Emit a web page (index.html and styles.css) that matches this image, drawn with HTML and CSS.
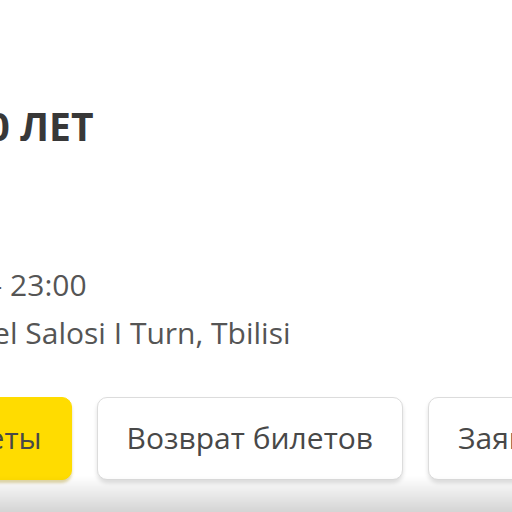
FILE: index.html
```html
<!DOCTYPE html>
<html lang="ru">
<head>
  <meta charset="UTF-8">
  <meta name="viewport" content="width=device-width, initial-scale=1.0">
  <title>ЗА 10 ЛЕТ - Tbilisi</title>
  <link rel="stylesheet" href="styles.css">
</head>
<body>
  <main class="event">
    <h1 class="event-title">ЗА 10 ЛЕТ</h1>

    <ul class="event-info">
      <li>19:00 – 23:00</li>
      <li>Z Hostel Salosi I Turn, Tbilisi</li>
    </ul>

    <div class="event-actions">
      <a class="btn btn-main" href="#">Билеты</a>
      <a class="btn" href="#">Возврат билетов</a>
      <a class="btn" href="#">Заявка на участие</a>
    </div>
  </main>

  <div class="page-fade"></div>
</body>
</html>
```

FILE: styles.css
```css
html, body {
  margin: 0;
  height: 100%;
  overflow: hidden;
  background: #fff;
}

body {
  font-family: 'Open Sans', 'Noto Sans', sans-serif;
  color: #333;
}

.event {
  margin-left: -97px;
  padding-top: 101px;
}

.event-title {
  margin: 0 0 110px;
  font-size: 39px;
  line-height: 50px;
  font-weight: 700;
  color: #383838;
  white-space: nowrap;
}

.event-info {
  list-style: none;
  margin: 0 0 40px;
  padding: 0;
  font-size: 30px;
  line-height: 48px;
  color: #555;
  white-space: nowrap;
}

.event-actions {
  display: flex;
  gap: 25px;
}

.btn {
  flex: none;
  padding: 20px 29px 21px;
  font-size: 30px;
  line-height: 40px;
  color: #484848;
  text-decoration: none;
  white-space: nowrap;
  background: #fff;
  border: 1px solid #dcdcdc;
  border-radius: 10px;
  box-shadow: 0 3px 4px rgba(0, 0, 0, 0.13);
}

.btn-main {
  background: #ffdc00;
  border-color: #ffdc00;
  box-shadow: 0 3px 3px rgba(170, 140, 0, 0.35);
}

/* soft shade along the lower edge */
.page-fade {
  position: fixed;
  left: 0;
  right: 0;
  bottom: 0;
  height: 36px;
  background: linear-gradient(rgba(0, 0, 0, 0), rgba(0, 0, 0, 0.17));
  pointer-events: none;
}
```
